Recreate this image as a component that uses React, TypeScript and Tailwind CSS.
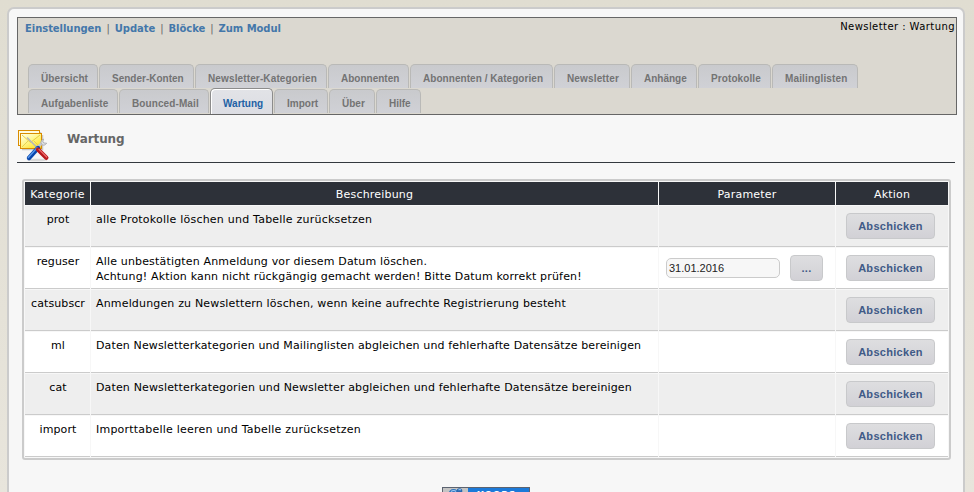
import React from 'react';

type Tab = { label: string; width: string; active?: boolean };

const firstRow: Tab[] = [
  { label: 'Übersicht', width: 'w-[70px] tracking-[0.1px]' },
  { label: 'Sender-Konten', width: 'w-[95px]' },
  { label: 'Newsletter-Kategorien', width: 'w-[132px] tracking-[0.130px]' },
  { label: 'Abonnenten', width: 'w-[81px]' },
  { label: 'Abonnenten / Kategorien', width: 'w-[143px] tracking-[0.050px]' },
  { label: 'Newsletter', width: 'w-[76px] tracking-[0.150px]' },
  { label: 'Anhänge', width: 'w-[66px]' },
  { label: 'Protokolle', width: 'w-[73px] tracking-[0.1px]' },
  { label: 'Mailinglisten', width: 'w-[86px] tracking-[0.150px]' },
];

const secondRow: Tab[] = [
  { label: 'Aufgabenliste', width: 'w-[90px] tracking-[0.1px]' },
  { label: 'Bounced-Mail', width: 'w-[90px] tracking-[0.1px]' },
  { label: 'Wartung', width: 'w-[63px]', active: true },
  { label: 'Import', width: 'w-[54px]' },
  { label: 'Über', width: 'w-[46px]' },
  { label: 'Hilfe', width: 'w-[45px]' },
];

type Task = { key: string; lines: string[]; tracking: string; date?: string };

const tasks: Task[] = [
  { key: 'prot', lines: ['alle Protokolle löschen und Tabelle zurücksetzen'], tracking: 'tracking-[0.220px]' },
  {
    key: 'reguser',
    lines: [
      'Alle unbestätigten Anmeldung vor diesem Datum löschen.',
      'Achtung! Aktion kann nicht rückgängig gemacht werden! Bitte Datum korrekt prüfen!',
    ],
    tracking: 'tracking-[0.17px]',
    date: '31.01.2016',
  },
  {
    key: 'catsubscr',
    lines: ['Anmeldungen zu Newslettern löschen, wenn keine aufrechte Registrierung besteht'],
    tracking: 'tracking-[0.165px]',
  },
  {
    key: 'ml',
    lines: ['Daten Newsletterkategorien und Mailinglisten abgleichen und fehlerhafte Datensätze bereinigen'],
    tracking: 'tracking-[0.135px]',
  },
  {
    key: 'cat',
    lines: ['Daten Newsletterkategorien und Newsletter abgleichen und fehlerhafte Datensätze bereinigen'],
    tracking: 'tracking-[0.145px]',
  },
  { key: 'import', lines: ['Importtabelle leeren und Tabelle zurücksetzen'], tracking: 'tracking-[0.22px]' },
];

function TabRow({ tabs }: { tabs: Tab[] }) {
  return (
    <div className="flex h-[25px] items-start gap-px">
      {tabs.map((t) => (
        <a
          key={t.label}
          className={
            'flex shrink-0 items-center whitespace-nowrap rounded-t-[5px] border border-b-0 pl-[12px] font-["Liberation_Sans",Arial,sans-serif] text-[10px] font-bold ' +
            t.width +
            (t.active
              ? ' -mt-px h-[26px] border-[#8c8c8c] bg-linear-to-b from-[#e2e3e7] to-[#dcdde3] pt-[3px] text-[#2261a4] shadow-[inset_1px_1px_0_#fff]'
              : ' h-6 border-[#b9b9b7] bg-linear-to-b from-[#c9cacd] to-[#d0d1d6] pt-[3px] text-[#737373]')
          }
        >
          {t.label}
        </a>
      ))}
    </div>
  );
}

function Button({ label, width }: { label: string; width: string }) {
  return (
    <button
      className={
        'h-[26px] shrink-0 rounded-[4px] border border-[#c8c9cb] bg-linear-to-b from-[#dedee0] to-[#d2d1d6] font-["Liberation_Sans",Arial,sans-serif] text-[11px] font-bold tracking-[0.3px] text-[#405a87] ' +
        width
      }
    >
      {label}
    </button>
  );
}

function MaintenanceIcon() {
  return (
    <svg width="32" height="32" viewBox="0 0 32 32" className="ml-px shrink-0">
      <defs>
        <linearGradient id="paper" x1="0" y1="0" x2="0.8" y2="1">
          <stop offset="0" stopColor="#fffff2" />
          <stop offset="0.5" stopColor="#fff68c" />
          <stop offset="1" stopColor="#ffdf20" />
        </linearGradient>
      </defs>
      <path d="M22.500 2v2M24.500 5v14.500H4" fill="none" stroke="#999" strokeWidth="1.500" opacity=".5" />
      <rect x=".5" y=".5" width="21" height="15" fill="#fffbe0" stroke="#d98c00" />
      <rect x="2.500" y="3.500" width="21" height="15" fill="url(#paper)" stroke="#d98c00" />
      <path d="M4 17l6-6M22 17l-6-6" fill="none" stroke="#e0c84a" strokeWidth=".8" />
      <path d="M4 5l8.500 7.500L22 5" fill="none" stroke="#e3c63c" strokeWidth=".9" />
      <ellipse cx="19" cy="30" rx="10" ry="1.300" fill="#bbb" opacity=".5" />
      <path d="M9 7.500l11 11" stroke="#b4b6ba" strokeWidth="1.600" />
      <path d="M19 18l5.500-5.500" stroke="#c6c8cb" strokeWidth="2.600" />
      <path d="M25.500 9c-2 .5-3.300 3-2 5s3.800 1.400 5.200-.8l-2.700-.2-1.200-1.500z" fill="#dcdee0" stroke="#9c9ea2" strokeWidth=".7" />
      <path d="M20 18L11 28" stroke="#0a47ad" strokeWidth="4.400" strokeLinecap="round" />
      <path d="M19.300 17.500L10.300 27.500" stroke="#5b9bee" strokeWidth="1.300" strokeLinecap="round" />
      <path d="M20 19.500l8.300 8.300" stroke="#b8191e" strokeWidth="4.400" strokeLinecap="round" />
      <path d="M21 19.300l7.700 7.700" stroke="#ee6f6f" strokeWidth="1.200" strokeLinecap="round" />
    </svg>
  );
}

export default function App() {
  return (
    <div className='h-[492px] w-[974px] overflow-hidden bg-linear-to-b from-[#e0ddd1] to-[#e8e5dc] pl-[7px] pt-[7px] font-["DejaVu_Sans",Verdana,sans-serif] text-[11px] text-black'>
      <div className="flex h-[500px] w-[958px] flex-col rounded-[7px] border-2 border-[#cbcbcb] bg-[#f7f7f7] px-2 pt-2">
        <header className="flex h-[98px] w-[940px] shrink-0 flex-col border border-[#666] bg-[#dbd8d0]">
          <div className="flex h-[46px] justify-between pl-[7px] pr-px">
            <nav className="flex gap-[5px] pt-[4px] text-[10px] leading-[14px] font-bold tracking-[-0.050px] text-[#4477aa]">
              <a>Einstellungen</a>
              <span className="font-normal text-[#666]">|</span>
              <a>Update</a>
              <span className="font-normal text-[#666]">|</span>
              <a>Blöcke</a>
              <span className="font-normal text-[#666]">|</span>
              <a>Zum Modul</a>
            </nav>
            <span className="pt-[2px] text-[10px] leading-[14px] tracking-[0.430px]">Newsletter : Wartung</span>
          </div>
          <div className="flex flex-col pl-[10px]">
            <TabRow tabs={firstRow} />
            <TabRow tabs={secondRow} />
          </div>
        </header>

        <div className="flex h-[48px] w-[938px] shrink-0 border-b border-[#33383e] pt-[15px]">
          <MaintenanceIcon />
          <h1 className="pt-px pl-[17px] text-[12px] leading-[16px] font-bold tracking-[-0.1px] text-[#666]">Wartung</h1>
        </div>

        <div className="mt-4 ml-[5px] grid w-[929px] shrink-0 grid-cols-[65px_567px_176px_112px] gap-px rounded-[3px] border-2 border-[#cbcbcb] bg-[#f7f7f7] p-px">
          {['Kategorie', 'Beschreibung', 'Parameter', 'Aktion'].map((h) => (
            <div key={h} className="flex h-[23px] items-center justify-center bg-[#2d3139] pt-[3px] tracking-[0.2px] text-white">
              {h}
            </div>
          ))}
          {tasks.map((task, i) => {
            const cell = 'h-[41px] border-b border-[#cbcbcb] ' + (i % 2 === 0 ? 'bg-[#eeeeee]' : 'bg-white');
            return (
              <React.Fragment key={task.key}>
                <div className={cell + ' pl-px pt-[6px] text-center leading-[15px] tracking-[0.1px]'}>{task.key}</div>
                <div className={cell + ' whitespace-nowrap pl-[5px] pt-[6px] leading-[15px] ' + task.tracking}>
                  {task.lines.map((l) => (
                    <div key={l}>{l}</div>
                  ))}
                </div>
                <div className={cell + ' flex items-center gap-[10px] pl-[7px]'}>
                  {task.date && (
                    <>
                      <input
                        readOnly
                        value={task.date}
                        className='h-5 w-[114px] rounded-[5px] border border-[#cbcbcb] bg-[#f7f7f7] px-[2px] font-["Liberation_Sans",Arial,sans-serif] text-[11px] text-[#222]'
                      />
                      <Button label="..." width="w-[33px]" />
                    </>
                  )}
                </div>
                <div className={cell + ' flex items-center pl-[10px]'}>
                  <Button label="Abschicken" width="w-[89px]" />
                </div>
              </React.Fragment>
            );
          })}
        </div>

        <footer className="mt-[27px] ml-[425px] flex h-[15px] w-[88px] shrink-0 overflow-hidden border border-[#5c6370] bg-[#1c7ad9]">
          <svg width="25" height="13" viewBox="0 0 25 13" className="shrink-0 bg-[#c4c4c4]">
            <circle cx="10.500" cy="6" r="5" fill="#2f74bd" />
            <circle cx="16.500" cy="3" r="2.800" fill="#2868b0" />
            <path d="M8 3.500q3-2 5 0M15.500 2q1.500-1 2.500 0" fill="none" stroke="#9cc8f4" strokeWidth="1.200" />
          </svg>
          <span className="pl-[9px] pt-px text-[9px] leading-[12px] font-bold tracking-[0.8px] text-white">XOOPS</span>
        </footer>
      </div>
    </div>
  );
}
